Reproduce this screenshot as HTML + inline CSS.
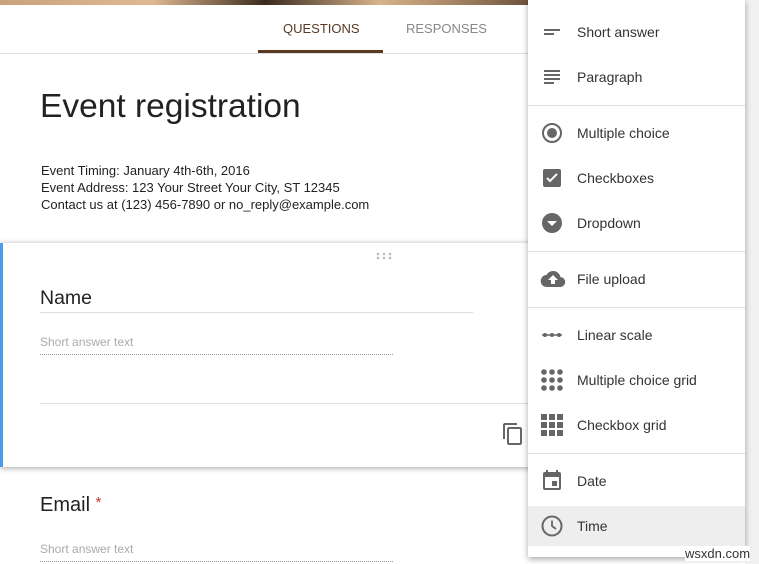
<!DOCTYPE html>
<html><head><style>
body{margin:0;width:759px;height:564px;overflow:hidden;background:#fff;font-family:"Liberation Sans",Arial,sans-serif;position:relative}
.a{position:absolute}
.banner{left:0;top:0;width:759px;height:5px;background:linear-gradient(90deg,#c9a27a,#e0b990 20%,#3a2a1e 35%,#d8b38a 50%,#8a6b50 65%,#241a12 80%,#b69070)}
.menu{left:528px;top:0;width:217px;height:557px;background:#fff;box-shadow:0 2px 6px rgba(0,0,0,.35)}
.it{position:absolute;left:0;width:217px;height:40px;}
.it span{position:absolute;left:49px;top:12px;font-size:14px;color:#333}
.it svg{position:absolute;left:12px;top:8px}
.div{position:absolute;left:0;width:217px;height:1px;background:#ddd}
</style></head><body>
<div class="a banner"></div>
<div class="a" style="left:0;top:53px;width:530px;height:1px;background:#ddd"></div>
<div class="a" style="left:283px;top:21px;font-size:13px;color:#5a3a22">QUESTIONS</div>
<div class="a" style="left:406px;top:21px;font-size:13px;color:#888">RESPONSES</div>
<div class="a" style="left:258px;top:50px;width:125px;height:3px;background:#5a3a22"></div>
<div class="a" style="left:40px;top:88px;font-size:33.5px;color:#222">Event registration</div>
<div class="a" style="left:41px;top:162px;font-size:13px;line-height:17px;color:#222">Event Timing: January 4th-6th, 2016<br>Event Address: 123 Your Street Your City, ST 12345<br>Contact us at (123) 456-7890 or no_reply@example.com</div>
<div class="a" style="left:0;top:243px;width:540px;height:224px;background:#fff;box-shadow:0 1px 6px rgba(0,0,0,.35)"></div>
<div class="a" style="left:0;top:243px;width:3px;height:224px;background:#4a9be8"></div>
<svg class="a" style="left:376px;top:252px" width="16" height="8" fill="#bbb"><circle cx="2" cy="2" r="1.3"/><circle cx="8" cy="2" r="1.3"/><circle cx="14" cy="2" r="1.3"/><circle cx="2" cy="6" r="1.3"/><circle cx="8" cy="6" r="1.3"/><circle cx="14" cy="6" r="1.3"/></svg>
<div class="a" style="left:40px;top:287px;font-size:19.5px;color:#222">Name</div>
<div class="a" style="left:40px;top:312px;width:433px;height:1px;background:#ddd"></div>
<div class="a" style="left:40px;top:335px;font-size:12px;color:#aaa">Short answer text</div>
<div class="a" style="left:40px;top:354px;width:353px;border-top:1px dotted #999"></div>
<div class="a" style="left:40px;top:403px;width:490px;height:1px;background:#ddd"></div>
<svg class="a" style="left:501px;top:422px" width="24" height="24" viewBox="0 0 24 24"><path d="M16 1H4c-1.1 0-2 .9-2 2v14h2V3h12V1zm3 4H8c-1.1 0-2 .9-2 2v14c0 1.1.9 2 2 2h11c1.1 0 2-.9 2-2V7c0-1.1-.9-2-2-2zm0 16H8V7h11v14z" fill="#666"/></svg>
<div class="a" style="left:40px;top:494px;font-size:20px;color:#222">Email <span style="color:#c33;font-size:15px;vertical-align:top">*</span></div>
<div class="a" style="left:40px;top:542px;font-size:12px;color:#aaa">Short answer text</div>
<div class="a" style="left:40px;top:561px;width:353px;border-top:1px dotted #999"></div>
<div class="a" style="left:745px;top:0;width:14px;height:564px;background:#f1f1f1"></div>
<div class="a menu">
<div class="it" style="top:12px"><svg width="24" height="24" viewBox="0 0 24 24"><path d="M4 9h16v2H4zm0 4h10v2H4z" fill="#666"/></svg><span>Short answer</span></div>
<div class="it" style="top:57px"><svg width="24" height="24" viewBox="0 0 24 24"><path d="M4 5h16v2H4zm0 4h16v2H4zm0 4h16v2H4zm0 4h10v2H4z" fill="#666"/></svg><span>Paragraph</span></div>
<div class="div" style="top:105px"></div>
<div class="it" style="top:113px"><svg width="24" height="24" viewBox="0 0 24 24"><circle cx="12" cy="12" r="9" fill="none" stroke="#666" stroke-width="2"/><circle cx="12" cy="12" r="5" fill="#666"/></svg><span>Multiple choice</span></div>
<div class="it" style="top:158px"><svg width="24" height="24" viewBox="0 0 24 24"><rect x="3" y="3" width="18" height="18" rx="2" fill="#666"/><path d="M7 12l3 3 7-7" stroke="#fff" stroke-width="2" fill="none"/></svg><span>Checkboxes</span></div>
<div class="it" style="top:203px"><svg width="24" height="24" viewBox="0 0 24 24"><circle cx="12" cy="12" r="10" fill="#666"/><path d="M7 10h10l-5 5z" fill="#fff"/></svg><span>Dropdown</span></div>
<div class="div" style="top:251px"></div>
<div class="it" style="top:259px"><svg width="26" height="24" viewBox="0 0 24 24"><path d="M19.4 10A7.5 7.5 0 0 0 5.4 8 6 6 0 0 0 6 20h13a5 5 0 0 0 .4-10zM14 13v4h-4v-4H7l5-5 5 5z" fill="#666"/></svg><span>File upload</span></div>
<div class="div" style="top:307px"></div>
<div class="it" style="top:315px"><svg width="24" height="24" viewBox="0 0 24 24"><path d="M2 12h20" stroke="#666" stroke-width="1.5"/><circle cx="5" cy="12" r="2" fill="#666"/><circle cx="12" cy="12" r="2" fill="#666"/><circle cx="19" cy="12" r="2" fill="#666"/></svg><span>Linear scale</span></div>
<div class="it" style="top:360px"><svg width="24" height="24" viewBox="0 0 24 24" fill="#666"><circle cx="4" cy="4" r="2.8"/><circle cx="12" cy="4" r="2.8"/><circle cx="20" cy="4" r="2.8"/><circle cx="4" cy="12" r="2.8"/><circle cx="12" cy="12" r="2.8"/><circle cx="20" cy="12" r="2.8"/><circle cx="4" cy="20" r="2.8"/><circle cx="12" cy="20" r="2.8"/><circle cx="20" cy="20" r="2.8"/></svg><span>Multiple choice grid</span></div>
<div class="it" style="top:405px"><svg width="24" height="24" viewBox="0 0 24 24" fill="#666"><rect x="1" y="1" width="6" height="6"/><rect x="9" y="1" width="6" height="6"/><rect x="17" y="1" width="6" height="6"/><rect x="1" y="9" width="6" height="6"/><rect x="9" y="9" width="6" height="6"/><rect x="17" y="9" width="6" height="6"/><rect x="1" y="17" width="6" height="6"/><rect x="9" y="17" width="6" height="6"/><rect x="17" y="17" width="6" height="6"/></svg><span>Checkbox grid</span></div>
<div class="div" style="top:453px"></div>
<div class="it" style="top:461px"><svg width="24" height="24" viewBox="0 0 24 24"><path d="M17 12h-5v5h5v-5zM16 1v2H8V1H6v2H5a2 2 0 0 0-2 2v14a2 2 0 0 0 2 2h14a2 2 0 0 0 2-2V5a2 2 0 0 0-2-2h-1V1h-2zm3 18H5V8h14v11z" fill="#666"/></svg><span>Date</span></div>
<div class="it" style="top:506px;background:#eee"><svg width="24" height="24" viewBox="0 0 24 24"><circle cx="12" cy="12" r="9.5" fill="none" stroke="#666" stroke-width="2"/><path d="M12 6.5V12l4 3" stroke="#666" stroke-width="1.8" fill="none"/></svg><span>Time</span></div>
</div>
<div class="a" style="left:685px;top:546px;font-size:13px;color:#333;background:#fff">wsxdn.com</div>
</body></html>
